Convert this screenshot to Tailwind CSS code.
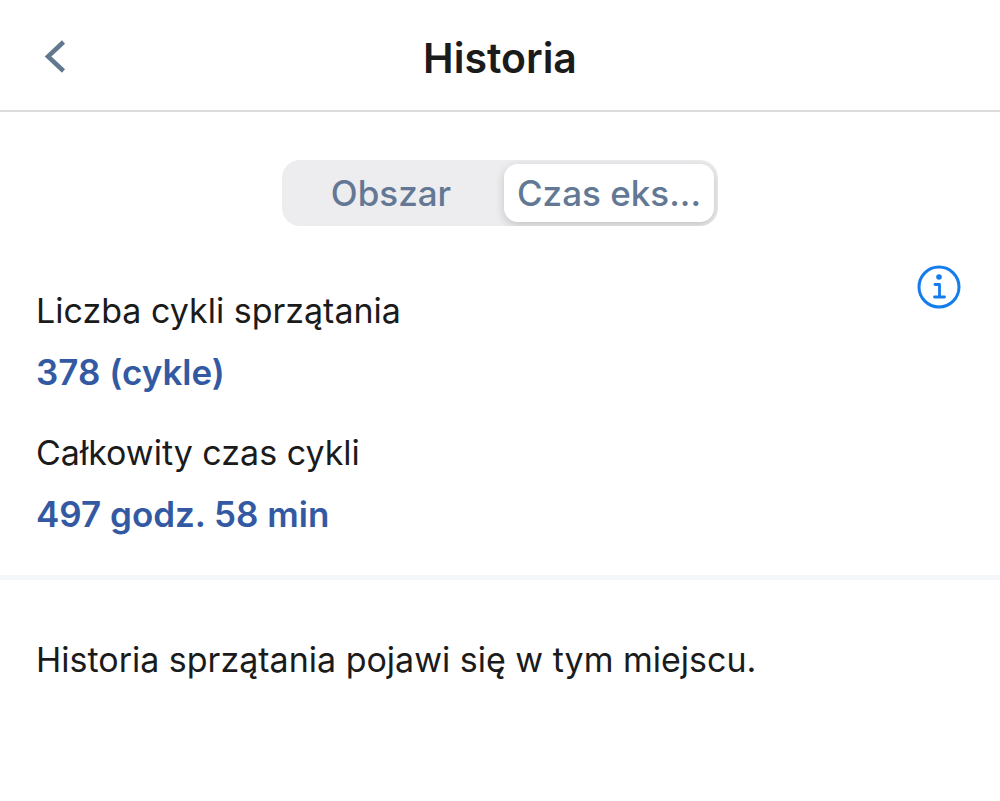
<!doctype html>
<html lang="pl">
    <head>
        <meta charset="utf-8">
        <meta name="viewport" content="width=device-width, initial-scale=1">

        <script src="https://cdn.jsdelivr.net/npm/@tailwindcss/browser@4"></script>

        <title>Historia</title>
    </head>
    <body class="min-h-screen bg-white font-['Inter',sans-serif] text-[#1b1b1b]">
        <header class="grid grid-cols-[1fr_auto_1fr] items-center border-b-2 border-[#dbdbdb] px-9 pt-1.5 h-28">
            <button type="button" aria-label="Wstecz" class="w-10 h-10 flex items-center justify-center">
                <svg class="w-10 h-10" viewBox="0 0 40 40" fill="none" stroke="#61788f" stroke-width="4.500">
                    <path d="M27.500 4L12 18.500L27.500 33"/>
                </svg>
            </button>
            <h1 class="text-[41px] leading-[48px] font-semibold">Historia</h1>
        </header>

        <main>
            <div class="flex justify-center pt-12">
                <div class="grid grid-cols-2 gap-2 w-[436px] p-1 rounded-[18px] bg-[#ededef] overflow-hidden">
                    <button type="button" aria-pressed="false" class="h-[58px] rounded-[14px] text-[35px] leading-10 font-medium text-[#627894]">Obszar</button>
                    <button type="button" aria-pressed="true" class="h-[58px] rounded-[14px] text-[35px] leading-10 font-medium text-[#627894] whitespace-nowrap bg-white shadow-[0_3px_10px_rgba(0,0,0,0.18)]">Czas eks...</button>
                </div>
            </div>

            <!-- Totals -->
            <section class="flex justify-between items-start pl-9 pr-[39px] pt-[39px] pb-[41px] border-b-[5px] border-[#f3f7fa]">
                <dl class="pt-[26px] text-[34px] leading-10">
                    <dt>Liczba cykli sprzątania</dt>
                    <dd class="mt-[21px] text-[35px] font-semibold text-[#3459a3]">378 (cykle)</dd>
                    <dt class="mt-[41px]">Całkowity czas cykli</dt>
                    <dd class="mt-[21px] text-[35px] font-semibold text-[#3459a3]">497 godz. 58 min</dd>
                </dl>
                <button type="button" aria-label="Informacje">
                    <svg class="w-11 h-11" viewBox="0 0 44 44" fill="none" stroke="#157cec" stroke-width="3">
                        <circle cx="22" cy="22" r="20"/>
                        <circle cx="22" cy="12" r="2.800" fill="#157cec" stroke="none"/>
                        <path d="M18 19.500H22.500V32M17.500 32H27.500" stroke-width="2.800" stroke-linecap="round" stroke-linejoin="round"/>
                    </svg>
                </button>
            </section>

            <p class="px-9 pt-[60px] text-[34px] leading-10">Historia sprzątania pojawi się w tym miejscu.</p>
        </main>
    </body>
</html>
